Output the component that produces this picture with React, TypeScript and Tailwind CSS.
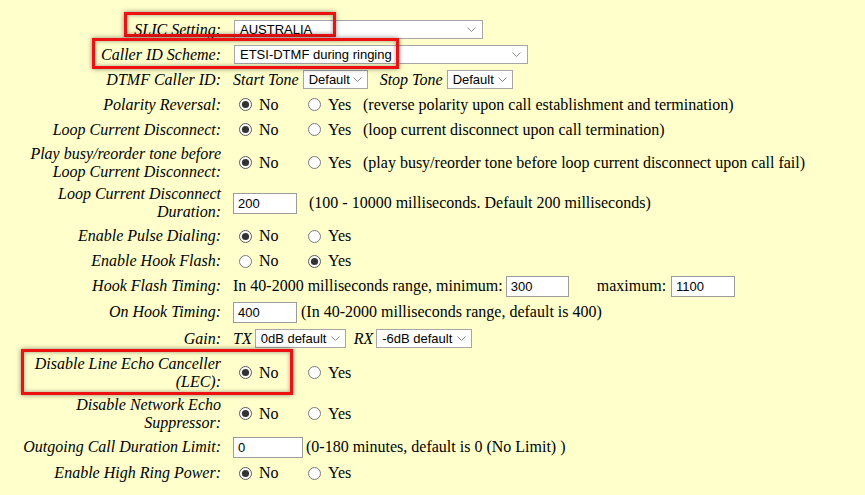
import React from "react";

const serif = { fontFamily: '"Liberation Serif", "Times New Roman", serif' };

function Radio({ checked }: { checked?: boolean }) {
  return (
    <svg width="13" height="13" viewBox="0 0 13 13" className="shrink-0">
      <circle cx="6.5" cy="6.5" r="6" fill="#fff" stroke={checked ? "#5a5a5a" : "#7a7a7a"} strokeWidth="1" />
      {checked && <circle cx="6.5" cy="6.5" r="3.6" fill="#333" />}
    </svg>
  );
}

function Chevron() {
  return (
    <svg width="9" height="5" viewBox="0 0 9 5" className="shrink-0">
      <path d="M0.5 0.5 L4.5 4.5 L8.5 0.5" fill="none" stroke="#8a8a8a" strokeWidth="1" />
    </svg>
  );
}

function Select({ value, w, chev = 6 }: { value: string; w: string; chev?: number }) {
  return (
    <div
      className={`${w} h-[19px] bg-white border border-[#a6a6a6] flex items-center justify-between pl-[5px] text-[13px] text-black leading-none`}
      style={{ fontFamily: '"Liberation Sans", Arial, sans-serif', paddingRight: chev }}
    >
      <span>{value}</span>
      <Chevron />
    </div>
  );
}

function Input({ value, w }: { value: string; w: string }) {
  return (
    <div
      className={`${w} h-[21px] bg-white border border-[#9c9c9c] flex items-center pl-[4px] text-[13px] text-black leading-none`}
      style={{ fontFamily: '"Liberation Sans", Arial, sans-serif' }}
    >
      <span className="pt-[1px]">{value}</span>
    </div>
  );
}

function YesNo({ yes, desc }: { yes?: boolean; desc?: string }) {
  return (
    <div className="flex items-center">
      <div className="flex items-center w-[69px] ml-[6px]">
        <Radio checked={!yes} />
        <span className="ml-[7px]">No</span>
      </div>
      <div className="flex items-center w-[55px]">
        <Radio checked={yes} />
        <span className="ml-[7px]">Yes</span>
      </div>
      {desc && <span>{desc}</span>}
    </div>
  );
}

function Row({ h, label, children }: { h: string; label: React.ReactNode; children: React.ReactNode }) {
  return (
    <div className={`flex items-center ${h}`}>
      <div className="w-[221px] text-right italic leading-[18px] shrink-0">{label}</div>
      <div className="ml-[12px] flex items-center whitespace-nowrap">{children}</div>
    </div>
  );
}

export default function App() {
  return (
    <div
      className="relative w-[865px] h-[495px] bg-[#ffffcc] text-black text-[16px] overflow-hidden"
      style={serif}
    >
      <div className="flex flex-col pt-[17px]">
        <Row h="h-[25px]" label="SLIC Setting:">
          <div className="ml-[1px]">
            <Select value="AUSTRALIA" w="w-[249px]" />
          </div>
        </Row>
        <Row h="h-[25px]" label="Caller ID Scheme:">
          <div className="ml-[1px]">
            <Select value="ETSI-DTMF during ringing" w="w-[294px]" />
          </div>
        </Row>
        <Row h="h-[25px]" label="DTMF Caller ID:">
          <span className="italic">Start Tone</span>
          <div className="ml-[4px]">
            <Select value="Default" w="w-[65px]" chev={5} />
          </div>
          <span className="italic ml-[12px]">Stop Tone</span>
          <div className="ml-[4px]">
            <Select value="Default" w="w-[66px]" chev={5} />
          </div>
        </Row>
        <Row h="h-[25px]" label="Polarity Reversal:">
          <YesNo desc="(reverse polarity upon call establishment and termination)" />
        </Row>
        <Row h="h-[25px]" label="Loop Current Disconnect:">
          <YesNo desc="(loop current disconnect upon call termination)" />
        </Row>
        <Row
          h="h-[41px]"
          label={
            <>
              Play busy/reorder tone before
              <br />
              Loop Current Disconnect:
            </>
          }
        >
          <YesNo desc="(play busy/reorder tone before loop current disconnect upon call fail)" />
        </Row>
        <Row
          h="h-[40px]"
          label={
            <>
              Loop Current Disconnect
              <br />
              Duration:
            </>
          }
        >
          <Input value="200" w="w-[64px]" />
          <span className="ml-[12px]">(100 - 10000 milliseconds. Default 200 milliseconds)</span>
        </Row>
        <Row h="h-[26px]" label="Enable Pulse Dialing:">
          <YesNo />
        </Row>
        <Row h="h-[24px]" label="Enable Hook Flash:">
          <YesNo yes />
        </Row>
        <Row h="h-[26px]" label="Hook Flash Timing:">
          <span>In 40-2000 milliseconds range, minimum:</span>
          <div className="ml-[3px]">
            <Input value="300" w="w-[63px]" />
          </div>
          <span className="ml-[28px]">maximum:</span>
          <div className="ml-[5px]">
            <Input value="1100" w="w-[64px]" />
          </div>
        </Row>
        <Row h="h-[26px]" label="On Hook Timing:">
          <Input value="400" w="w-[64px]" />
          <span className="ml-[4px]">(In 40-2000 milliseconds range, default is 400)</span>
        </Row>
        <Row h="h-[27px]" label="Gain:">
          <span className="italic">TX</span>
          <div className="ml-[3px]">
            <Select value="0dB default" w="w-[91px]" chev={5} />
          </div>
          <span className="italic ml-[8px]">RX</span>
          <div className="ml-[3px]">
            <Select value="-6dB default" w="w-[96px]" chev={5} />
          </div>
        </Row>
        <Row
          h="h-[41px]"
          label={
            <>
              Disable Line Echo Canceller
              <br />
              (LEC):
            </>
          }
        >
          <YesNo />
        </Row>
        <Row
          h="h-[41px]"
          label={
            <>
              Disable Network Echo
              <br />
              Suppressor:
            </>
          }
        >
          <YesNo />
        </Row>
        <Row h="h-[26px]" label="Outgoing Call Duration Limit:">
          <Input value="0" w="w-[70px]" />
          <span className="ml-[3px]">(0-180 minutes, default is 0 (No Limit) )</span>
        </Row>
        <Row h="h-[26px]" label="Enable High Ring Power:">
          <YesNo />
        </Row>
      </div>

      {/* red highlight boxes */}
      <div className="absolute left-[124px] top-[12px] w-[212px] h-[25px] border-[3px] border-[#ee1111] shadow-[0_0_5px_rgba(0,0,0,0.45),inset_0_0_4px_rgba(0,0,0,0.4)] pointer-events-none" />
      <div className="absolute left-[92px] top-[38px] w-[307px] h-[31px] border-[3px] border-[#ee1111] shadow-[0_0_5px_rgba(0,0,0,0.45),inset_0_0_4px_rgba(0,0,0,0.4)] pointer-events-none" />
      <div className="absolute left-[21px] top-[349px] w-[272px] h-[46px] border-[3px] border-[#ee1111] shadow-[0_0_5px_rgba(0,0,0,0.45),inset_0_0_4px_rgba(0,0,0,0.4)] pointer-events-none" />
    </div>
  );
}
